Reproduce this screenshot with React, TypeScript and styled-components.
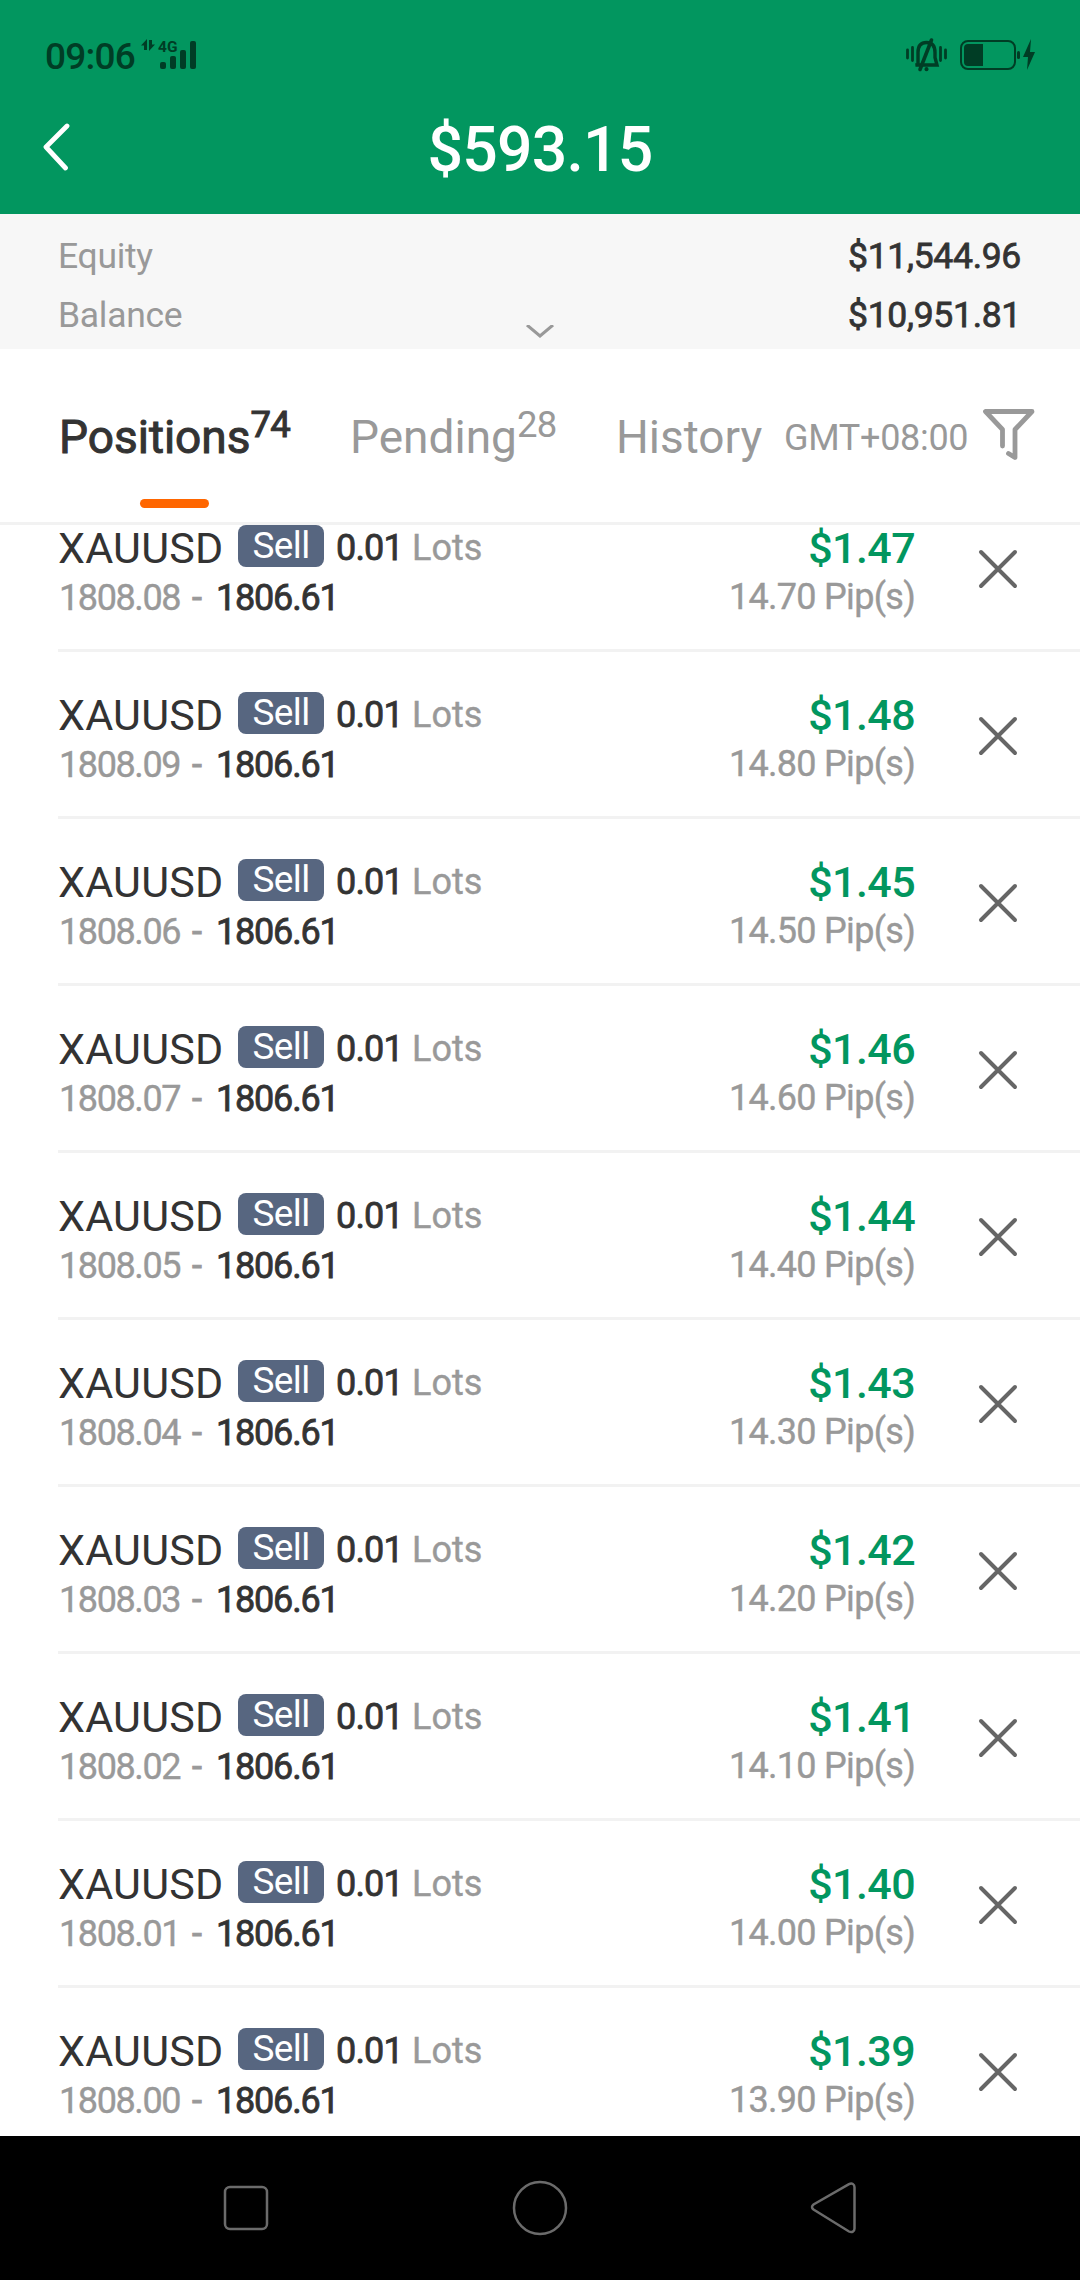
import React from "react";
import styled, { createGlobalStyle } from "styled-components";

const GREEN = "#02965f";
const INK = "#333333";
const GREY = "#999999";
const STATUS = "#003d25";

const GlobalStyle = createGlobalStyle`
  * { box-sizing: border-box; }
  html, body { margin: 0; padding: 0; background: #ffffff; }
  body { font-family: Roboto, "Noto Sans", sans-serif; }
  svg { display: block; flex: none; }
`;

const Screen = styled.main`
  width: 1080px;
  height: 2280px;
  display: flex;
  flex-direction: column;
  background: #ffffff;
  overflow: hidden;
`;

const Header = styled.header`
  flex: none;
  height: 214px;
  background: ${GREEN};
`;

const StatusBar = styled.div`
  height: 80px;
  padding: 36px 44px 0 45px;
  display: flex;
  justify-content: space-between;
  align-items: flex-start;
  color: ${STATUS};
`;

const StatusGroup = styled.div`
  display: flex;
  align-items: flex-start;
`;

const Clock = styled.span`
  width: 95px;
  font-size: 37px;
  font-weight: 500;
  line-height: 41px;
  letter-spacing: -0.8px;
`;

const Network = styled.div`
  width: 40px;
  display: flex;
  flex-direction: column;
`;

const NetworkType = styled.span`
  height: 5px;
  font-size: 15.5px;
  font-weight: 700;
  line-height: 22px;
`;

const TitleBar = styled.div`
  height: 134px;
  display: grid;
  grid-template-columns: 90px 1fr 90px;
  align-items: start;
`;

const BackButton = styled.button`
  border: 0;
  background: none;
  padding: 42px 0 0 42px;
`;

const Title = styled.h1`
  margin: 31px 0 0;
  font-size: 62.5px;
  font-weight: 500;
  line-height: 78px;
  letter-spacing: -0.8px;
  color: #ffffff;
  text-align: center;
`;

const Summary = styled.section`
  flex: none;
  height: 135px;
  padding: 13px 59px 0 58px;
  background: #f7f7f7;
`;

const SummaryRow = styled.div`
  height: 59px;
  display: flex;
  justify-content: space-between;
  line-height: 58px;
  font-size: 35.5px;
`;

const SummaryLabel = styled.span`
  color: ${GREY};
  letter-spacing: -0.3px;
`;

const SummaryValue = styled.span`
  color: ${INK};
  -webkit-text-stroke: 0.8px currentColor;
  letter-spacing: -0.3px;
`;

const Expander = styled.div`
  display: flex;
  justify-content: center;
  margin-top: -20px;
  padding-left: 1px;
`;

const Tabs = styled.nav`
  flex: none;
  height: 176px;
  display: flex;
  border-bottom: 3px solid #f2f2f2;
  padding: 0 44px 0 59px;
`;

const Tab = styled.div<{ $active?: boolean; $width: number }>`
  flex: none;
  width: ${(p) => p.$width}px;
  padding-top: 59px;
  display: flex;
  flex-direction: column;
  color: ${(p) => (p.$active ? INK : GREY)};
  -webkit-text-stroke: ${(p) => (p.$active ? "1px" : "0")} currentColor;
`;

const TabLabel = styled.div`
  display: flex;
  height: 58px;
  font-size: 46px;
  line-height: 58px;
`;

const TabCount = styled.span`
  font-size: 36.5px;
  line-height: 33px;
  letter-spacing: -0.7px;
`;

const Indicator = styled.span`
  width: 69px;
  height: 9px;
  margin: 33px 0 0 81px;
  border-radius: 5px;
  background: #ff6600;
`;

const TimeZone = styled.span`
  width: 201px;
  padding-top: 60px;
  font-size: 36px;
  letter-spacing: -0.3px;
  line-height: 58px;
  color: ${GREY};
`;

const FilterButton = styled.button`
  border: 0;
  padding: 58px 0 0;
  background: none;
  display: flex;
  align-items: flex-start;
`;

const ListViewport = styled.section`
  flex: 1;
  min-height: 0;
  margin-top: -3px;
  padding-top: 3px;
  overflow: hidden;
`;

const List = styled.ul`
  list-style: none;
  margin: -40px 0 0;
  padding: 0 0 0 58px;
`;

const Item = styled.li`
  height: 167px;
  padding-top: 40px;
  display: flex;
  border-bottom: 3px solid #f2f2f2;
`;

const Trade = styled.div`
  flex: 1;
`;

const Line = styled.div`
  display: flex;
  align-items: flex-start;
  height: 53px;
`;

const Symbol = styled.span`
  width: 180px;
  font-size: 43px;
  line-height: 47px;
  letter-spacing: 0.2px;
  color: ${INK};
`;

const Badge = styled.span`
  width: 86px;
  height: 42px;
  border-radius: 8px;
  background: #576680;
  color: #ffffff;
  font-size: 37px;
  line-height: 41px;
  letter-spacing: -0.6px;
  text-align: center;
`;

const Volume = styled.span`
  width: 76px;
  margin-left: 12px;
  font-size: 36px;
  line-height: 47px;
  letter-spacing: -0.8px;
  color: ${INK};
  -webkit-text-stroke: 0.8px currentColor;
`;

const Unit = styled.span`
  font-size: 36px;
  line-height: 47px;
  color: ${GREY};
  -webkit-text-stroke: 0.4px currentColor;
`;

const Prices = styled.div`
  display: flex;
  font-size: 36px;
  line-height: 41px;
`;

const OpenPrice = styled.span`
  width: 132px;
  padding-left: 1px;
  color: ${GREY};
  letter-spacing: -1.4px;
  -webkit-text-stroke: 0.4px currentColor;
`;

const Dash = styled.span`
  width: 26px;
  padding-left: 2px;
  color: ${GREY};
  -webkit-text-stroke: 0.9px currentColor;
`;

const MarketPrice = styled.span`
  color: ${INK};
  letter-spacing: -1.2px;
  -webkit-text-stroke: 0.8px currentColor;
`;

const Result = styled.div`
  text-align: right;
`;

const Profit = styled.div`
  height: 52px;
  font-size: 43px;
  font-weight: 500;
  line-height: 47px;
  letter-spacing: -0.6px;
  color: ${GREEN};
`;

const Pips = styled.div`
  font-size: 36px;
  line-height: 41px;
  letter-spacing: -0.7px;
  color: ${GREY};
  -webkit-text-stroke: 0.4px currentColor;
`;

const CloseButton = styled.button`
  width: 165px;
  border: 0;
  background: none;
  padding: 23px 0 0 62px;
  display: flex;
  align-items: flex-start;
`;

const NavBar = styled.footer`
  flex: none;
  height: 144px;
  padding: 0 222px 0 222px;
  display: flex;
  align-items: center;
  justify-content: space-between;
  background: #000000;
`;

const positions: { open: string; profit: string; pips: string }[] = [
  { open: "1808.08", profit: "$1.47", pips: "14.70" },
  { open: "1808.09", profit: "$1.48", pips: "14.80" },
  { open: "1808.06", profit: "$1.45", pips: "14.50" },
  { open: "1808.07", profit: "$1.46", pips: "14.60" },
  { open: "1808.05", profit: "$1.44", pips: "14.40" },
  { open: "1808.04", profit: "$1.43", pips: "14.30" },
  { open: "1808.03", profit: "$1.42", pips: "14.20" },
  { open: "1808.02", profit: "$1.41", pips: "14.10" },
  { open: "1808.01", profit: "$1.40", pips: "14.00" },
  { open: "1808.00", profit: "$1.39", pips: "13.90" },
];

const DataArrows = () => (
  <svg width="18" height="16" viewBox="0 0 18 16" fill={STATUS}>
    <path d="M7 3v11H4V9.500H1z" />
    <path d="M9 4h3v4.500h3L9 15z" />
  </svg>
);

const SignalBars = () => (
  <svg width="40" height="28" viewBox="0 0 40 28" fill={STATUS}>
    <rect x="2" y="21" width="6" height="7" rx="2" />
    <rect x="12" y="15" width="6" height="13" rx="2" />
    <rect x="22" y="9" width="6" height="19" rx="2" />
    <rect x="32" y="0" width="6" height="28" rx="2" />
  </svg>
);

const MutedBell = () => (
  <svg width="54" height="38" viewBox="0 0 54 38" fill="none" stroke={STATUS} strokeLinecap="round">
    <path d="M1.500 14v8M6.500 11.500v13M34.500 11.500v13M39.500 14v8" strokeWidth="2.800" />
    <path d="M12 28.500V16.500c0-6.500 3-10 8.500-10s8.500 3.500 8.500 10v5l2 7.500H9.500z" strokeWidth="3.400" />
    <path d="M14 33.500L25.500 4" strokeWidth="3.600" />
    <path d="M20.500 33v.200" strokeWidth="4" />
  </svg>
);

const Battery = () => (
  <svg width="76" height="36" viewBox="0 0 76 36">
    <rect x="1" y="5" width="54" height="28" rx="7" fill="none" stroke={STATUS} strokeWidth="2" />
    <path d="M8 8h15v22H8a4 4 0 0 1-4-4V12a4 4 0 0 1 4-4z" fill={STATUS} />
    <rect x="57" y="15" width="3" height="8" rx="1.500" fill={STATUS} />
    <path d="M71 3L63 21h5l-1 13 8-18h-5z" fill={STATUS} />
  </svg>
);

const Filter = () => (
  <svg width="54" height="56" viewBox="0 0 54 56" fill="none" stroke={GREY} strokeWidth="4.800" strokeLinejoin="round" strokeLinecap="round">
    <path d="M20.500 39V22.500L3.500 4.500h46.500L33 22.500V50.500L26.500 46.500" />
  </svg>
);

export default function App() {
  return (
    <Screen>
      <GlobalStyle />
      <Header>
        <StatusBar>
          <StatusGroup>
            <Clock>09:06</Clock>
            <DataArrows />
            <Network>
              <NetworkType>4G</NetworkType>
              <SignalBars />
            </Network>
          </StatusGroup>
          <StatusGroup>
            <MutedBell />
            <Battery />
          </StatusGroup>
        </StatusBar>
        <TitleBar>
          <BackButton aria-label="Back">
            <svg width="28" height="50" viewBox="0 0 28 50" fill="none" stroke="#ffffff" strokeWidth="4.800" strokeLinecap="round" strokeLinejoin="round">
              <path d="M25 4L4 25l19.500 21" />
            </svg>
          </BackButton>
          <Title>$593.15</Title>
        </TitleBar>
      </Header>

      <Summary>
        <SummaryRow>
          <SummaryLabel>Equity</SummaryLabel>
          <SummaryValue>$11,544.96</SummaryValue>
        </SummaryRow>
        <SummaryRow>
          <SummaryLabel>Balance</SummaryLabel>
          <SummaryValue>$10,951.81</SummaryValue>
        </SummaryRow>
        <Expander>
          <svg width="28" height="13" viewBox="0 0 28 13" fill="none" stroke={GREY} strokeWidth="3">
            <path d="M1 0l13 11L27 0" />
          </svg>
        </Expander>
      </Summary>

      <Tabs>
        <Tab $active $width={291}>
          <TabLabel>
            Positions<TabCount>74</TabCount>
          </TabLabel>
          <Indicator />
        </Tab>
        <Tab $width={266}>
          <TabLabel>
            Pending<TabCount>28</TabCount>
          </TabLabel>
        </Tab>
        <Tab $width={168}>
          <TabLabel>History</TabLabel>
        </Tab>
        <TimeZone>GMT+08:00</TimeZone>
        <FilterButton aria-label="Filter">
          <Filter />
        </FilterButton>
      </Tabs>

      <ListViewport>
        <List>
          {positions.map((p) => (
            <Item key={p.open}>
              <Trade>
                <Line>
                  <Symbol>XAUUSD</Symbol>
                  <Badge>Sell</Badge>
                  <Volume>0.01</Volume>
                  <Unit>Lots</Unit>
                </Line>
                <Prices>
                  <OpenPrice>{p.open}</OpenPrice>
                  <Dash>-</Dash>
                  <MarketPrice>1806.61</MarketPrice>
                </Prices>
              </Trade>
              <Result>
                <Profit>{p.profit}</Profit>
                <Pips>{p.pips} Pip(s)</Pips>
              </Result>
              <CloseButton aria-label="Close position">
                <svg width="42" height="42" viewBox="0 0 42 42" stroke="#666666" strokeWidth="4" strokeLinecap="round">
                  <path d="M4 4l34 34M38 4L4 38" />
                </svg>
              </CloseButton>
            </Item>
          ))}
        </List>
      </ListViewport>

      <NavBar>
        <svg width="48" height="56" viewBox="0 0 48 56" fill="none" stroke="#6b6b6b" strokeWidth="2.500">
          <rect x="3" y="7" width="42" height="42" rx="5" />
        </svg>
        <svg width="56" height="56" viewBox="0 0 56 56" fill="none" stroke="#6b6b6b" strokeWidth="2.500">
          <circle cx="28" cy="28" r="26" />
        </svg>
        <svg width="48" height="56" viewBox="0 0 48 56" fill="none" stroke="#6b6b6b" strokeWidth="2.500">
          <path d="M39 4.200L3.500 24.500c-2 1.500-2 3.500 0 5L39 51.500c3 1.500 5.500 0 5.500-3V7.200c0-3-2.500-4.500-5.500-3z" />
        </svg>
      </NavBar>
    </Screen>
  );
}
